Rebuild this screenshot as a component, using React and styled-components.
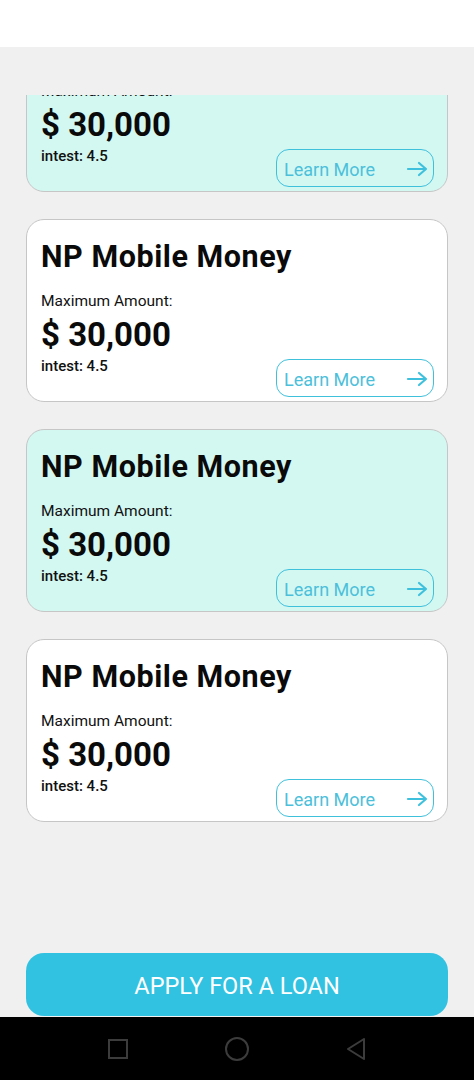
import React from "react";
import styled, { createGlobalStyle } from "styled-components";

const Global = createGlobalStyle`
  html, body { margin: 0; padding: 0; }
  body { font-family: Roboto, "Noto Sans", "Liberation Sans", sans-serif; background: #f0f0f0; }
  * { box-sizing: border-box; }
`;

const Screen = styled.div`
  width: 474px;
  height: 1080px;
  display: flex;
  flex-direction: column;
  overflow: hidden;
`;

const Header = styled.div`
  height: 47px;
  background: #ffffff;
  flex-shrink: 0;
`;

const Body = styled.div`
  flex: 1;
  background: #f0f0f0;
  display: flex;
  flex-direction: column;
  padding-top: 48px;
  min-height: 0;
`;

const ScrollArea = styled.div`
  flex: 1;
  overflow: hidden;
  min-height: 0;
`;

const List = styled.div`
  margin-top: -86px;
  padding: 0 26px;
  display: flex;
  flex-direction: column;
  gap: 27px;
`;

const Card = styled.div`
  height: 183px;
  border-radius: 18px;
  border: 1px solid #c6c6c6;
  background: ${(p) => (p.$tinted ? "#d3f8f2" : "#ffffff")};
  padding: 19px 13px 0 14px;
  display: flex;
  flex-direction: column;
`;

const Title = styled.div`
  font-size: 30.5px;
  line-height: 36px;
  font-weight: 700;
  letter-spacing: 0.55px;
  color: #0a0a0a;
`;

const Label = styled.div`
  margin-top: 16px;
  font-size: 15.5px;
  line-height: 20px;
  color: #111;
`;

const Amount = styled.div`
  margin-top: 4px;
  font-size: 33px;
  line-height: 40px;
  font-weight: 700;
  color: #0a0a0a;
`;

const Footer = styled.div`
  margin-top: 1px;
  display: flex;
  justify-content: space-between;
  align-items: flex-start;
`;

const Rate = styled.div`
  font-size: 15px;
  line-height: 20px;
  font-weight: 500;
  color: #111;
`;

const LearnButton = styled.div`
  margin-top: 3px;
  width: 158px;
  height: 38px;
  border: 1.5px solid #3fc1dc;
  border-radius: 13px;
  display: flex;
  align-items: center;
  justify-content: space-between;
  padding: 2px 5px 0 7px;
  font-size: 18px;
  color: #4cc0da;
`;

const ApplyButton = styled.div`
  margin: 0 26px 1px;
  height: 63px;
  border-radius: 18px;
  background: #31c2e2;
  color: #ffffff;
  font-size: 23.5px;
  padding-top: 3px;
  display: flex;
  align-items: center;
  justify-content: center;
  flex-shrink: 0;
`;

const NavBar = styled.div`
  height: 63px;
  background: #000000;
  flex-shrink: 0;
  display: flex;
  align-items: center;
  justify-content: space-between;
  padding: 0 107px 0 107px;
`;

const Arrow = () => (
  <svg width="22" height="16" viewBox="0 0 22 16" fill="none" stroke="#3fc0dc" strokeWidth="2.2" strokeLinecap="round" strokeLinejoin="round">
    <path d="M2 8h18M13 2l7 6-7 6" />
  </svg>
);

const LoanCard = ({ tinted }) => (
  <Card $tinted={tinted}>
    <Title>NP Mobile Money</Title>
    <Label>Maximum Amount:</Label>
    <Amount>$ 30,000</Amount>
    <Footer>
      <Rate>intest: 4.5</Rate>
      <LearnButton>
        <span>Learn More</span>
        <Arrow />
      </LearnButton>
    </Footer>
  </Card>
);

export default function App() {
  return (
    <Screen>
      <Global />
      <Header />
      <Body>
        <ScrollArea>
          <List>
            <LoanCard tinted />
            <LoanCard />
            <LoanCard tinted />
            <LoanCard />
          </List>
        </ScrollArea>
        <ApplyButton>APPLY FOR A LOAN</ApplyButton>
      </Body>
      <NavBar>
        <svg width="22" height="22" viewBox="0 0 22 22" fill="none" stroke="#3c3c3c" strokeWidth="2">
          <rect x="2" y="2" width="18" height="18" />
        </svg>
        <svg width="26" height="26" viewBox="0 0 26 26" fill="none" stroke="#3c3c3c" strokeWidth="2">
          <circle cx="13" cy="13" r="11" />
        </svg>
        <svg width="22" height="24" viewBox="0 0 22 24" fill="none" stroke="#3c3c3c" strokeWidth="2" strokeLinejoin="round">
          <path d="M19 2L3 12l16 10z" />
        </svg>
      </NavBar>
    </Screen>
  );
}
